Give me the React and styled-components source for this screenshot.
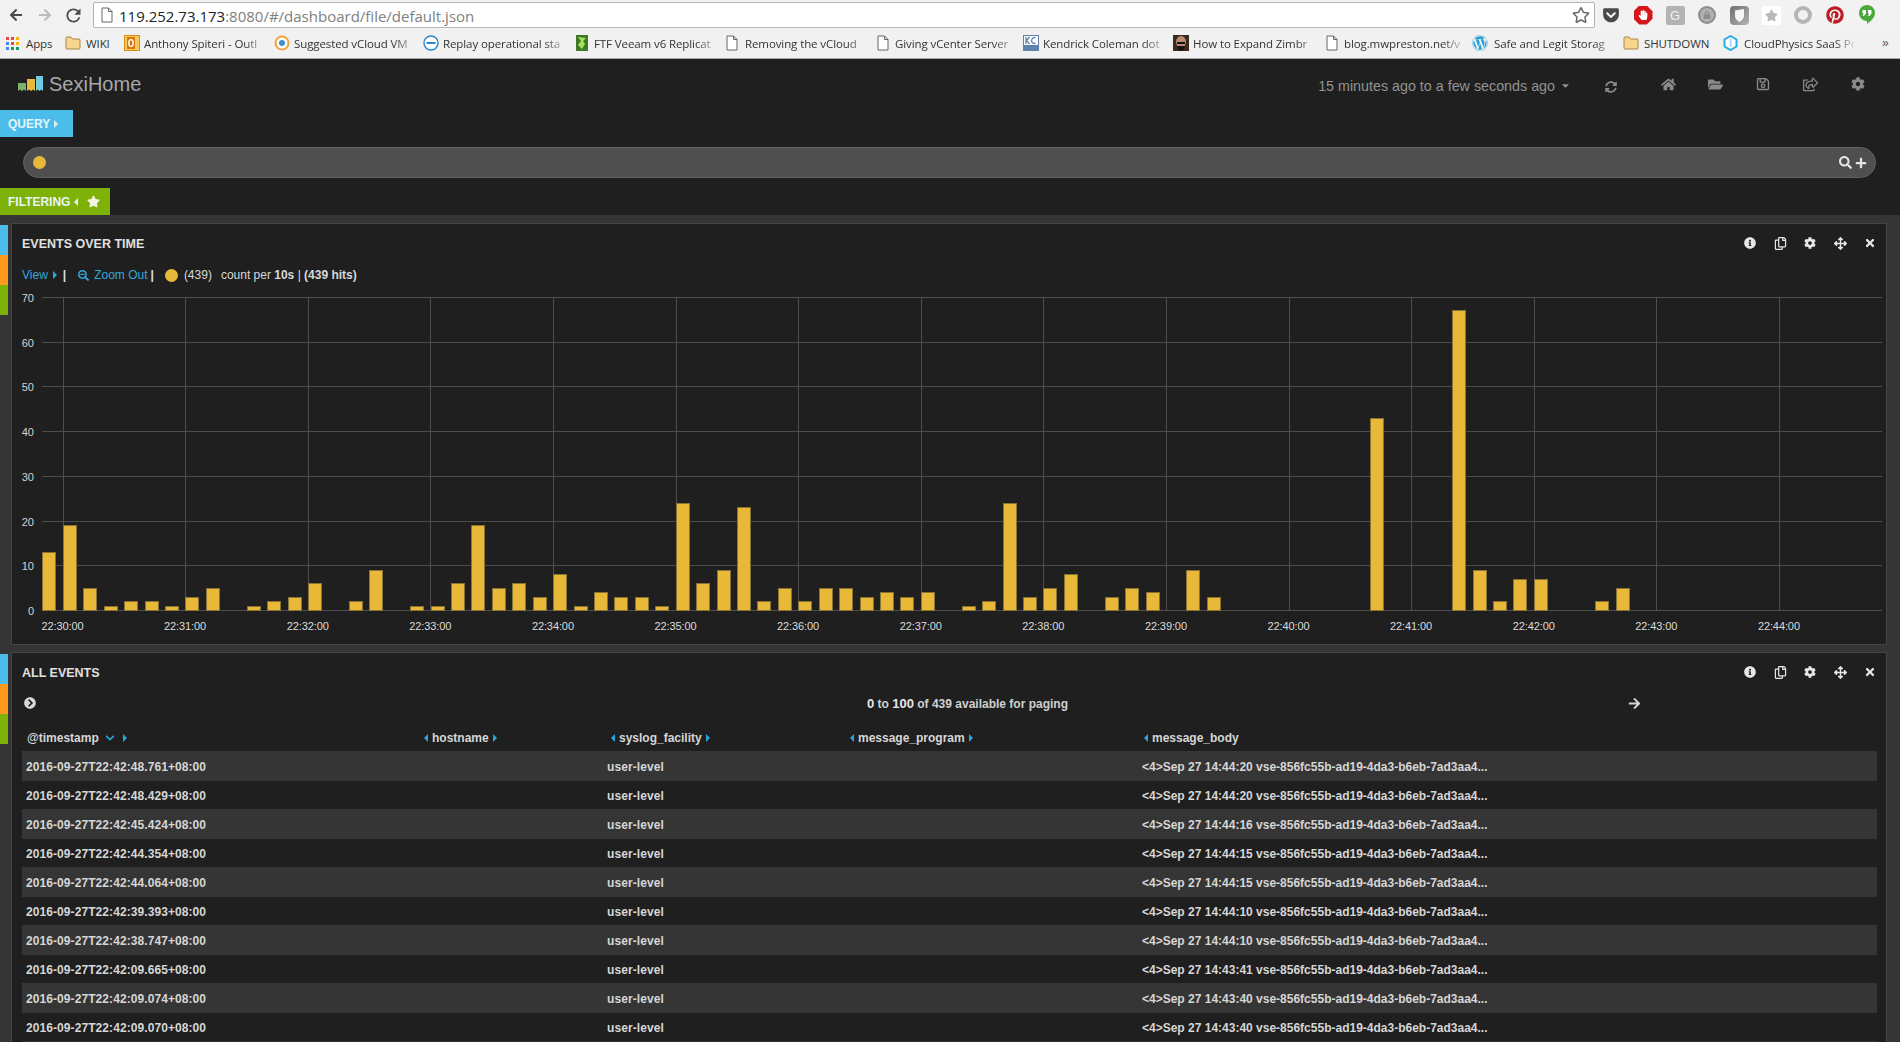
import React from "react";
import styled, { createGlobalStyle } from "styled-components";
import {
  FaArrowLeft, FaArrowRight, FaArrowsAlt, FaCaretDown, FaChevronCircleRight,
  FaChevronDown, FaCog, FaFolderOpen, FaGetPocket, FaHome, FaInfoCircle, FaLock, FaPinterest, FaPlus,
  FaRegCopy, FaRegSave, FaRegShareSquare, FaRegStar, FaSearch, FaSearchMinus, FaStar,
  FaSyncAlt, FaTimes, FaWordpress, FaHandPaper,
} from "react-icons/fa";
import { MdRefresh } from "react-icons/md";

const Global = createGlobalStyle`
  html, body { margin: 0; height: 1042px; overflow: hidden; background: #1f1f1f; }
  body { font-family: "Liberation Sans", Arial, sans-serif; font-size: 12px; }
  * { box-sizing: border-box; }
`;

const Page = styled.div`
  width: 1900px;
  height: 1042px;
  overflow: hidden;
  display: flex;
  flex-direction: column;
`;

/* browser chrome */
const Toolbar = styled.div`
  height: 30px;
  flex: none;
  display: flex;
  align-items: center;
  padding-left: 1px;
  overflow: hidden;
  background: #f2f2f2;
`;

const NavSlot = styled.div`
  width: 29px;
  flex: none;
  display: flex;
  justify-content: center;
  color: ${(p) => (p.$off ? "#bcbcbc" : "#4b4b4b")};
`;

const AddressBar = styled.div`
  width: 1502px;
  height: 26px;
  flex: none;
  margin-left: 5px;
  display: flex;
  align-items: center;
  padding-left: 7px;
  background: #fff;
  border: 1px solid #b4b4b4;
  border-radius: 2px;
  font-family: "Open Sans", sans-serif;
  font-size: 15px;
  line-height: 26px;
  color: #808080;
`;

const Url = styled.span`
  margin-left: 6px;
  padding-top: 1px;
`;

const Host = styled.span`
  color: #222;
`;

const BarStar = styled.span`
  margin-left: auto;
  margin-right: 4px;
  display: flex;
  color: #6a6a6a;
`;

const ExtSlot = styled.div`
  width: 32px;
  flex: none;
  display: flex;
  justify-content: center;
  align-items: center;
`;

const Bookmarks = styled.div`
  height: 29px;
  flex: none;
  display: flex;
  align-items: center;
  background: #f1f1f1;
  border-bottom: 1px solid #a9a9a9;
  padding: 0 0 2px 6px;
  overflow: hidden;
`;

const Mark = styled.div`
  flex: none;
  width: ${(p) => p.$w}px;
  display: flex;
  align-items: center;
  gap: ${(p) => p.$gap ?? 4}px;
  font-family: "Open Sans", sans-serif;
  font-size: 11.5px;
  letter-spacing: -0.1px;
  color: #333;
  white-space: nowrap;
`;

const MarkLabel = styled.span`
  flex: 1;
  min-width: 0;
  ${(p) => p.$fade && "margin-right: 8px; mask-image: linear-gradient(to right, #000 82%, rgba(0, 0, 0, .15));"}
`;

const More = styled.span`
  flex: none;
  color: #555;
  font-size: 12px;
  margin-left: 20px;
`;

/* dashboard header */
const Nav = styled.div`
  height: 51px;
  flex: none;
  display: flex;
  align-items: center;
  justify-content: space-between;
  padding: 0 18px 1px;
  background: #1f1f1f;
`;

const Brand = styled.div`
  display: flex;
  align-items: center;
  gap: 6px;
  font-size: 20px;
  color: #a8a8a8;
`;

const NavTools = styled.div`
  display: flex;
  align-items: center;
  color: #8a8a8a;
`;

const TimeRange = styled.span`
  display: flex;
  align-items: center;
  gap: 5px;
  font-size: 14.3px;
  color: #939393;
  margin-right: 16px;
  margin-top: 3px;
`;

const NavIcon = styled.span`
  width: 47.5px;
  display: flex;
  justify-content: center;
  margin-right: ${(p) => p.$gap || 0}px;
  margin-top: ${(p) => p.$top || 0}px;
`;

const TabRow = styled.div`
  height: 27px;
  flex: none;
  background: #1f1f1f;
`;

const Tab = styled.div`
  height: 27px;
  width: ${(p) => p.$w}px;
  display: flex;
  align-items: center;
  gap: 4px;
  padding-left: 8px;
  background: ${(p) => p.$bg};
  color: #e6f4fa;
  font-weight: 700;
  font-size: 12px;
`;

const TabStar = styled(FaStar)`
  margin-left: 5px;
  color: #f0f5e0;
`;

const QueryRow = styled.div`
  height: 51px;
  flex: none;
  padding: 10px 24px 10px 23px;
  background: #1f1f1f;
`;

const Pill = styled.div`
  height: 31px;
  display: flex;
  align-items: center;
  justify-content: space-between;
  padding: 0 8px 0 9px;
  background: #4f4f4f;
  border: 1px solid #626262;
  border-radius: 16px;
  color: #e4e4e4;
`;

const PillTools = styled.div`
  display: flex;
  align-items: center;
  gap: 3px;
`;

const Dot = styled.span`
  width: 13px;
  height: 13px;
  flex: none;
  display: inline-block;
  border-radius: 50%;
  background: #e8b83a;
  margin-left: ${(p) => p.$ml || 0}px;
`;

/* panels */
const Board = styled.div`
  flex: 1;
  min-height: 0;
  background: #353535;
  padding: 8px 13px 0 0;
  display: flex;
  flex-direction: column;
  gap: 7px;
`;

const Row = styled.div`
  display: flex;
  gap: 3px;
`;

const RowTabs = styled.div`
  width: 8px;
  flex: none;
  padding-top: 2px;
`;

const RowTab = styled.div`
  height: 30px;
  background: ${(p) => p.$c};
`;

const Panel = styled.section`
  flex: 1;
  min-width: 0;
  background: #1f1f1f;
  border: 1px solid #454545;
  padding-bottom: ${(p) => p.$pad || 0}px;
`;

const PanelHead = styled.div`
  height: 38px;
  display: flex;
  align-items: center;
  justify-content: space-between;
  padding: 0 1px 0 10px;
`;

const Title = styled.h2`
  margin: 1px 0 0;
  font-size: 12.5px;
  font-weight: 700;
  color: #e0e0e0;
`;

const PanelTools = styled.div`
  display: flex;
  color: #e6e6e6;
`;

const PanelTool = styled.span`
  width: 30px;
  display: flex;
  justify-content: center;
`;

const ViewRow = styled.div`
  height: 23px;
  padding: 3px 0 0 10px;
  display: flex;
  align-items: center;
  font-size: 12px;
  color: #d8d8d8;
`;

const Link = styled.span`
  display: flex;
  align-items: center;
  gap: 5px;
  color: #35a7d6;
  margin-left: ${(p) => p.$ml || 0}px;
`;

const Pipe = styled.span`
  color: #e0e0e0;
  font-weight: 700;
  margin-left: ${(p) => p.$ml || 0}px;
`;

const Count = styled.span`
  margin-left: ${(p) => p.$ml || 0}px;
  white-space: pre;
`;

const ChartSvg = styled.svg`
  display: block;
  width: 1874px;
  height: 350px;
  font-family: "Liberation Sans", Arial, sans-serif;
  font-size: 11px;
`;

const Paging = styled.div`
  height: 24px;
  padding-left: 12px;
  display: grid;
  grid-template-columns: 843px 761px 1fr;
  align-items: center;
  color: #d8d8d8;
`;

const PagingText = styled.span`
  font-size: 12px;
  font-weight: 700;
  color: #d0d0d0;
`;

const PagingNum = styled.b`
  font-size: 13px;
  color: #e8e8e8;
`;

const Table = styled.table`
  margin-left: 10px;
  width: 1855px;
  border-collapse: collapse;
  table-layout: fixed;
  color: #d6d6d6;
  font-size: 12px;
  font-weight: 700;
`;

const Th = styled.th`
  height: 36px;
  padding: 9px 0 0 ${(p) => p.$pl ?? 4}px;
  text-align: left;
  font-weight: 700;
  white-space: nowrap;
`;

const ThInner = styled.span`
  display: flex;
  align-items: center;
  gap: 4px;
`;

const Tr = styled.tr`
  &:nth-child(odd) { background: #353535; height: 30px; }
  &:nth-child(even) { height: 28px; }
`;

const Td = styled.td`
  padding: 1px 0 0 ${(p) => (p.$body ? 3 : 4)}px;
  white-space: nowrap;
  letter-spacing: ${(p) => (p.$body ? 0 : 0.08)}px;
`;

const Caret = styled.i`
  display: inline-block;
  width: 0;
  height: 0;
  flex: none;
  border-top: 4px solid transparent;
  border-bottom: 4px solid transparent;
  ${(p) => (p.$left ? "border-right: 4px solid #29a7de;" : "border-left: 4px solid #29a7de;")}
`;

const WhiteCaret = styled(Caret)`
  ${(p) => (p.$left ? "border-right-color: #dfeef5;" : "border-left-color: #dfeef5;")}
`;

const Tint = styled.span`
  display: flex;
  color: #29a7de;
  margin: 0 4px 0 2px;
`;

/* little pictures */
const Folder = () => (
  <svg width="16" height="14" viewBox="0 0 16 14">
    <path d="M1 3V2a1 1 0 0 1 1-1h4l1.5 2H14a1 1 0 0 1 1 1v8a1 1 0 0 1-1 1H2a1 1 0 0 1-1-1z" fill="#f8d68e" stroke="#a8874e" />
  </svg>
);

const Doc = () => (
  <svg width="12" height="16" viewBox="0 0 12 16">
    <path d="M1 1h6.5L11 4.500V15H1zM7.500 1v3.500H11" fill="#fff" stroke="#666" />
  </svg>
);

const AppsGrid = () => (
  <svg width="13" height="13" viewBox="0 0 13 13">
    {["#e5483c", "#e5483c", "#f4b400", "#4285f4", "#e5483c", "#f4b400", "#4285f4", "#0f9d58", "#0f9d58"].map((c, i) => (
      <rect key={i} x={(i % 3) * 5} y={Math.floor(i / 3) * 5} width="3" height="3" fill={c} />
    ))}
  </svg>
);

const Favicon = ({ kind }) => {
  if (kind === "outlook")
    return (
      <svg width="16" height="16" viewBox="0 0 16 16">
        <rect x=".5" y=".5" width="15" height="15" fill="#f7c860" stroke="#e08a10" />
        <rect x="3" y="2" width="8" height="12" fill="#d9780f" />
        <ellipse cx="7" cy="8" rx="2.200" ry="3.400" fill="none" stroke="#fff" strokeWidth="1.400" />
      </svg>
    );
  if (kind === "vcloud")
    return (
      <svg width="16" height="16" viewBox="0 0 16 16">
        <circle cx="8" cy="8" r="6.500" fill="#fff" stroke="#f0a23c" strokeWidth="2" />
        <circle cx="8" cy="8" r="3" fill="#3f8fc8" />
      </svg>
    );
  if (kind === "dell")
    return (
      <svg width="16" height="16" viewBox="0 0 16 16">
        <circle cx="8" cy="8" r="7" fill="#fff" stroke="#2a85c8" strokeWidth="1.400" />
        <rect x="3.500" y="7" width="9" height="2" fill="#2a85c8" />
      </svg>
    );
  if (kind === "veeam")
    return (
      <svg width="16" height="16" viewBox="0 0 16 16">
        <rect x="2" width="12" height="16" fill="#3c7a2a" />
        <path d="M4 2l3 4-3 4 4 4 3-5-2-3 3-3z" fill="#a4e05a" />
      </svg>
    );
  if (kind === "kc")
    return (
      <svg width="16" height="16" viewBox="0 0 16 16">
        <rect width="16" height="16" fill="#5f83ad" />
        <rect x="1" y="1" width="14" height="9" fill="#fff" />
        <path d="M3 2v7M6.500 2L3.500 5.500 6.500 9M12.500 3A2.500 3 0 1 0 12.500 8" fill="none" stroke="#5f83ad" strokeWidth="1.300" />
      </svg>
    );
  if (kind === "face")
    return (
      <svg width="16" height="16" viewBox="0 0 16 16">
        <rect width="16" height="16" fill="#3a2a22" />
        <ellipse cx="8" cy="7" rx="5" ry="6" fill="#b98a70" />
        <path d="M4 7h8v2H4z" fill="#111" />
        <path d="M4 11h8l-2 5H6z" fill="#1c1410" />
      </svg>
    );
  if (kind === "wp") return <FaWordpress size={16} color="#2a9fd6" />;
  return (
    <svg width="15" height="16" viewBox="0 0 15 16">
      <path d="M7.500 1L13.500 4.500V11.500L7.500 15L1.500 11.500V4.500z" fill="#fff" stroke="#29abe2" strokeWidth="2" />
      <rect x="6.600" y="4" width="2" height="8" fill="#a8def5" />
    </svg>
  );
};

const Logo = () => (
  <svg width="25" height="16" viewBox="0 0 25 16">
    <path d="M0 7h8v8l-2-1.500L4 15l-2-1.500L0 15z" fill="#79b36b" />
    <path d="M9 3h8v12l-2-1.500L13 15l-2-1.500L9 15z" fill="#e8b83a" />
    <path d="M18 0h7v15l-1.700-1.500L21.500 15l-1.700-1.500L18 15z" fill="#6ecbe0" />
  </svg>
);

const Hangouts = () => (
  <svg width="16" height="20" viewBox="0 0 16 20">
    <path d="M8 0a8 8 0 0 1 8 8c0 4.500-4 8-8 11V16A8 8 0 0 1 8 0z" fill="#4da83c" />
    <path d="M3.500 5h3.500v3.500L5 11H3.500L4.800 8.500H3.500zM9 5h3.500v3.500L10.500 11H9l1.300-2.500H9z" fill="#fff" />
  </svg>
);

const StopBadge = styled.span`
  width: 19px;
  height: 19px;
  display: flex;
  align-items: center;
  justify-content: center;
  background: #d3171c;
  color: #fff;
  clip-path: polygon(30% 0, 70% 0, 100% 30%, 100% 70%, 70% 100%, 30% 100%, 0 70%, 0 30%);
`;

const GBadge = styled.span`
  width: 19px;
  height: 19px;
  display: flex;
  align-items: center;
  justify-content: center;
  background: #b3b3b3;
  border-radius: 2px;
  color: #f2f2f2;
  font-size: 13px;
`;

const RoundBadge = styled.span`
  width: 18px;
  height: 18px;
  display: flex;
  align-items: center;
  justify-content: center;
  border-radius: 50%;
  background: ${(p) => p.$bg};
  border: ${(p) => p.$ring || "none"};
`;

const ShieldBadge = styled.span`
  width: 19px;
  height: 19px;
  display: flex;
  align-items: center;
  justify-content: center;
  background: linear-gradient(135deg, #6f6f6f, #b5b5b5);
  border-radius: 4px;
`;

const StarBadge = styled.span`
  width: 19px;
  height: 19px;
  display: flex;
  align-items: center;
  justify-content: center;
  background: #fff;
  color: #b8b8b8;
`;

const MenuBars = styled.span`
  width: 10px;
  height: 11px;
  margin-left: 14px;
  border-top: 2px solid #d33;
  border-bottom: 2px solid #d33;
  background: linear-gradient(#d33, #d33) center / 100% 2px no-repeat;
`;

const marks = [
  { w: 59, label: "Apps", icon: <AppsGrid />, gap: 7 },
  { w: 59, label: "WIKI", icon: <Folder />, gap: 5 },
  { w: 150, label: "Anthony Spiteri - Outl", icon: <Favicon kind="outlook" />, fade: 1 },
  { w: 149, label: "Suggested vCloud VM", icon: <Favicon kind="vcloud" />, fade: 1 },
  { w: 151, label: "Replay operational sta", icon: <Favicon kind="dell" />, fade: 1 },
  { w: 152, label: "FTF Veeam v6 Replicat", icon: <Favicon kind="veeam" />, fade: 1 },
  { w: 151, label: "Removing the vCloud", icon: <Doc />, fade: 1, gap: 7 },
  { w: 146, label: "Giving vCenter Server", icon: <Doc />, fade: 1, gap: 6 },
  { w: 150, label: "Kendrick Coleman dot", icon: <Favicon kind="kc" />, fade: 1 },
  { w: 153, label: "How to Expand Zimbr", icon: <Favicon kind="face" />, fade: 1 },
  { w: 146, label: "blog.mwpreston.net/v", icon: <Doc />, fade: 1, gap: 6 },
  { w: 151, label: "Safe and Legit Storag", icon: <Favicon kind="wp" />, fade: 1, gap: 6 },
  { w: 100, label: "SHUTDOWN", icon: <Folder />, gap: 5 },
  { w: 139, label: "CloudPhysics SaaS Por", icon: <Favicon kind="cp" />, fade: 1, gap: 6 },
];

// event count per 10s bucket, first bucket starts 22:29:50
const counts = [
  13, 19, 5, 1, 2, 2, 1, 3, 5, 0, 1, 2, 3, 6, 0, 2, 9, 0, 1, 1, 6, 19, 5, 6, 3, 8, 1, 4, 3, 3, 1, 24, 6, 9, 23, 2, 5, 2, 5,
  5, 3, 4, 3, 4, 0, 1, 2, 24, 3, 5, 8, 0, 3, 5, 4, 0, 9, 3, 0, 0, 0, 0, 0, 0, 0, 43, 0, 0, 0, 67, 9, 2, 7, 7, 0, 0, 2, 5,
];

const yTicks = [0, 10, 20, 30, 40, 50, 60, 70];
const minutes = ["30", "31", "32", "33", "34", "35", "36", "37", "38", "39", "40", "41", "42", "43", "44"];
const BASE = 610;
const UNIT = 313 / 70;
const tickX = (i) => 62.5 + i * 122.6;

const Chart = () => (
  <ChartSvg viewBox="12 285 1874 350">
    {yTicks.map((t) => {
      const y = Math.round(BASE - t * UNIT) + 0.5;
      return (
        <g key={t}>
          <line x1="42" x2="1882" y1={y} y2={y} stroke="#4d4d4d" />
          <text x="34" y={y + 4} textAnchor="end" fill="#d4d4d4">{t}</text>
        </g>
      );
    })}
    {minutes.map((m, i) => (
      <g key={m}>
        <line x1={Math.round(tickX(i)) + 0.5} x2={Math.round(tickX(i)) + 0.5} y1="297" y2="610" stroke="#4d4d4d" />
        <text x={tickX(i)} y="630" textAnchor="middle" fill="#dcdcdc" letterSpacing="-0.1">{`22:${m}:00`}</text>
      </g>
    ))}
    {counts.map((c, i) =>
      c > 0 ? (
        <rect
          key={i}
          x={Math.round(42.4 + i * 20.43) + 0.5}
          y={Math.round(BASE - c * UNIT) + 0.5}
          width="13"
          height={Math.round(c * UNIT)}
          fill="#e8b838"
          stroke="#8a7233"
        />
      ) : null
    )}
  </ChartSvg>
);

const events = [
  ["48.761", "14:44:20"],
  ["48.429", "14:44:20"],
  ["45.424", "14:44:16"],
  ["44.354", "14:44:15"],
  ["44.064", "14:44:15"],
  ["39.393", "14:44:10"],
  ["38.747", "14:44:10"],
  ["09.665", "14:43:41"],
  ["09.074", "14:43:40"],
  ["09.070", "14:43:40"],
];

const PanelIcons = () => (
  <PanelTools>
    <PanelTool><FaInfoCircle size={12} /></PanelTool>
    <PanelTool><FaRegCopy size={13} /></PanelTool>
    <PanelTool><FaCog size={12} /></PanelTool>
    <PanelTool><FaArrowsAlt size={13} /></PanelTool>
    <PanelTool><FaTimes size={12} /></PanelTool>
  </PanelTools>
);

const Stripes = () => (
  <RowTabs>
    <RowTab $c="#4cbdea" />
    <RowTab $c="#ff9a1f" />
    <RowTab $c="#7eb208" />
  </RowTabs>
);

export default function App() {
  return (
    <Page>
      <Global />
      <Toolbar>
        <NavSlot><FaArrowLeft size={14} /></NavSlot>
        <NavSlot $off><FaArrowRight size={14} /></NavSlot>
        <NavSlot><MdRefresh size={21} /></NavSlot>
        <AddressBar>
          <Doc />
          <Url><Host>119.252.73.173</Host>:8080/#/dashboard/file/default.json</Url>
          <BarStar><FaRegStar size={18} /></BarStar>
        </AddressBar>
        <ExtSlot><FaGetPocket size={18} color="#4a4a4a" /></ExtSlot>
        <ExtSlot><StopBadge><FaHandPaper size={10} /></StopBadge></ExtSlot>
        <ExtSlot><GBadge>G</GBadge></ExtSlot>
        <ExtSlot><RoundBadge $bg="#b2b2b2" $ring="2px solid #8c8c8c"><FaLock size={8} color="#8c8c8c" /></RoundBadge></ExtSlot>
        <ExtSlot>
          <ShieldBadge>
            <svg width="11" height="13" viewBox="0 0 11 13">
              <path d="M1 1.500L10 0v7c0 3-2.500 4.500-4.500 6C3 11.500 1 10 1 7z" fill="#f4f4f4" />
            </svg>
          </ShieldBadge>
        </ExtSlot>
        <ExtSlot><StarBadge><FaStar size={13} /></StarBadge></ExtSlot>
        <ExtSlot><RoundBadge $bg="#f2f2f2" $ring="4px solid #b5b5b5" /></ExtSlot>
        <ExtSlot><FaPinterest size={18} color="#bd1c26" /></ExtSlot>
        <ExtSlot><Hangouts /></ExtSlot>
        <ExtSlot><MenuBars /></ExtSlot>
      </Toolbar>
      <Bookmarks>
        {marks.map((m) => (
          <Mark key={m.label} $w={m.w} $gap={m.gap}>
            {m.icon}
            <MarkLabel $fade={m.fade}>{m.label}</MarkLabel>
          </Mark>
        ))}
        <More>»</More>
      </Bookmarks>

      <Nav>
        <Brand><Logo />SexiHome</Brand>
        <NavTools>
          <TimeRange>15 minutes ago to a few seconds ago <FaCaretDown size={11} /></TimeRange>
          <NavIcon $gap={10} $top={5}><FaSyncAlt size={12} /></NavIcon>
          <NavIcon><FaHome size={15} /></NavIcon>
          <NavIcon><FaFolderOpen size={15} /></NavIcon>
          <NavIcon><FaRegSave size={14} /></NavIcon>
          <NavIcon><FaRegShareSquare size={15} /></NavIcon>
          <NavIcon><FaCog size={14} /></NavIcon>
        </NavTools>
      </Nav>

      <TabRow>
        <Tab $w={73} $bg="#4cbdea">QUERY <WhiteCaret /></Tab>
      </TabRow>
      <QueryRow>
        <Pill>
          <Dot />
          <PillTools><FaSearch size={13} /><FaPlus size={12} /></PillTools>
        </Pill>
      </QueryRow>
      <TabRow>
        <Tab $w={110} $bg="#7eb208">FILTERING <WhiteCaret $left /><TabStar size={13} /></Tab>
      </TabRow>

      <Board>
        <Row>
          <Stripes />
          <Panel $pad={9}>
            <PanelHead>
              <Title>EVENTS OVER TIME</Title>
              <PanelIcons />
            </PanelHead>
            <ViewRow>
              <Link>View <Caret /></Link>
              <Pipe $ml={6}>|</Pipe>
              <Link $ml={12}><FaSearchMinus size={11} />Zoom Out</Link>
              <Pipe $ml={3}>|</Pipe>
              <Dot $ml={11} />
              <Count $ml={6}>(439)</Count>
              <Count $ml={9}>count per <b>10s</b> | <b>(439 hits)</b></Count>
            </ViewRow>
            <Chart />
          </Panel>
        </Row>
        <Row>
          <Stripes />
          <Panel>
            <PanelHead>
              <Title>ALL EVENTS</Title>
              <PanelIcons />
            </PanelHead>
            <Paging>
              <FaChevronCircleRight size={12} />
              <PagingText><PagingNum>0</PagingNum> to <PagingNum>100</PagingNum> of 439 available for paging</PagingText>
              <FaArrowRight size={13} />
            </Paging>
            <Table>
              <colgroup>
                <col width="398" />
                <col width="183" />
                <col width="243" />
                <col width="293" />
                <col width="738" />
              </colgroup>
              <thead>
                <tr>
                  <Th $pl={5}><ThInner>@timestamp <Tint><FaChevronDown size={10} /></Tint><Caret /></ThInner></Th>
                  <Th><ThInner><Caret $left />hostname <Caret /></ThInner></Th>
                  <Th $pl={8}><ThInner><Caret $left />syslog_facility <Caret /></ThInner></Th>
                  <Th><ThInner><Caret $left />message_program <Caret /></ThInner></Th>
                  <Th $pl={5}><ThInner><Caret $left />message_body</ThInner></Th>
                </tr>
              </thead>
              <tbody>
                {events.map(([stamp, clock]) => (
                  <Tr key={stamp}>
                    <Td>{`2016-09-27T22:42:${stamp}+08:00`}</Td>
                    <Td />
                    <Td>user-level</Td>
                    <Td />
                    <Td $body>{`<4>Sep 27 ${clock} vse-856fc55b-ad19-4da3-b6eb-7ad3aa4...`}</Td>
                  </Tr>
                ))}
                <Tr><Td colSpan={5} /></Tr>
              </tbody>
            </Table>
          </Panel>
        </Row>
      </Board>
    </Page>
  );
}
